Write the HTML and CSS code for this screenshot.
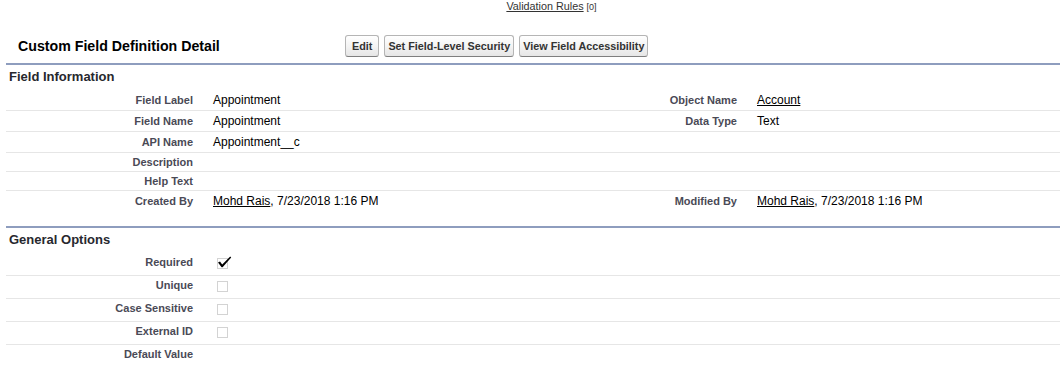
FILE: index.html
```html
<!doctype html>
<html>
  <head>
    <meta charset="utf-8">
    <title>Custom Field Definition Detail</title>
    <link rel="stylesheet" href="styles.css">
  </head>

  <body>
    <div class="relatedLinks">
      <a href="#">Validation Rules</a> <span class="count">[0]</span>
    </div>

    <div class="page">
      <div class="blockHeader">
        <h2 class="mainTitle">Custom Field Definition Detail</h2>
        <div class="buttons">
          <button class="btn"> Edit </button>
          <button class="btn">Set Field-Level Security</button>
          <button class="btn">View Field Accessibility</button>
        </div>
      </div>

      <div class="section">
        <h3>Field Information</h3>
        <div class="detailList">
          <div class="row">
            <div class="labelCol">Field Label</div>
            <div class="dataCol">Appointment</div>
            <div class="labelCol">Object Name</div>
            <div class="dataCol"><a href="#">Account</a></div>
          </div>
          <div class="row">
            <div class="labelCol">Field Name</div>
            <div class="dataCol">Appointment</div>
            <div class="labelCol">Data Type</div>
            <div class="dataCol">Text</div>
          </div>
          <div class="row">
            <div class="labelCol">API Name</div>
            <div class="dataCol">Appointment__c</div>
            <div class="labelCol"></div>
            <div class="dataCol"></div>
          </div>
          <div class="row">
            <div class="labelCol">Description</div>
            <div class="dataCol"></div>
            <div class="labelCol"></div>
            <div class="dataCol"></div>
          </div>
          <div class="row">
            <div class="labelCol">Help Text</div>
            <div class="dataCol"></div>
            <div class="labelCol"></div>
            <div class="dataCol"></div>
          </div>
          <div class="row last">
            <div class="labelCol">Created By</div>
            <div class="dataCol"><a href="#">Mohd Rais</a>, 7/23/2018 1:16 PM</div>
            <div class="labelCol">Modified By</div>
            <div class="dataCol"><a href="#">Mohd Rais</a>, 7/23/2018 1:16 PM</div>
          </div>
        </div>
      </div>

      <div class="section options">
        <h3>General Options</h3>
        <div class="detailList">
          <div class="row">
            <div class="labelCol">Required</div>
            <div class="dataCol">
              <svg class="checkImg" width="21" height="17" viewBox="0 0 21 17">
                <rect x="4.5" y="2.5" width="10" height="10" fill="none" stroke="#a6a6a6" stroke-dasharray="1 1"/>
                <path d="M5 6.6 L7 5.6 L9.2 8.4 L17.2 0.4 L18.2 1.4 L9.6 11.2 L8.6 11.2 Z" fill="#000"/>
              </svg>
            </div>
          </div>
          <div class="row">
            <div class="labelCol">Unique</div>
            <div class="dataCol">
              <svg class="checkImg" width="21" height="17" viewBox="0 0 21 17">
                <rect x="4.5" y="2.5" width="10" height="10" fill="none" stroke="#a6a6a6" stroke-dasharray="1 1"/>
              </svg>
            </div>
          </div>
          <div class="row">
            <div class="labelCol">Case Sensitive</div>
            <div class="dataCol">
              <svg class="checkImg" width="21" height="17" viewBox="0 0 21 17">
                <rect x="4.5" y="2.5" width="10" height="10" fill="none" stroke="#a6a6a6" stroke-dasharray="1 1"/>
              </svg>
            </div>
          </div>
          <div class="row">
            <div class="labelCol">External ID</div>
            <div class="dataCol">
              <svg class="checkImg" width="21" height="17" viewBox="0 0 21 17">
                <rect x="4.5" y="2.5" width="10" height="10" fill="none" stroke="#a6a6a6" stroke-dasharray="1 1"/>
              </svg>
            </div>
          </div>
          <div class="row last">
            <div class="labelCol">Default Value</div>
            <div class="dataCol"></div>
          </div>
        </div>
      </div>
    </div>
  </body>
</html>
```

FILE: styles.css
```css
body {
  margin:0;
  font-family:"Liberation Sans", Arial, sans-serif;
  font-size:12px;
  color:#000;
  background-color:#fff;
}

a {
  color:#000;
  text-decoration:underline;
}

.relatedLinks {
  padding-left:43px;
  text-align:center;
  font-size:10.8px;
  line-height:12px;
  color:#333;
}

.relatedLinks a {
  color:#333;
}

.relatedLinks .count {
  font-size:9px;
}

.page {
  padding-left:6px;
}

.blockHeader {
  display:flex;
  align-items:center;
  padding-top:22px;
  padding-bottom:6px;
}

.mainTitle {
  box-sizing:border-box;
  width:339px;
  margin:0;
  padding-left:12px;
  font-size:14.2px;
  font-weight:bold;
  line-height:18px;
  color:#000;
}

.buttons {
  display:flex;
  gap:5px;
}

.btn {
  margin:0;
  padding:4px 3px;
  font-family:"Liberation Sans", Arial, sans-serif;
  font-size:10.8px;
  font-weight:bold;
  line-height:12px;
  white-space:pre;
  color:#333;
  border:1px solid #b5b5b5;
  border-bottom-color:#7f7f7f;
  border-radius:3px;
  background:linear-gradient(#ffffff, #f4f4f4 50%, #e6e6e6);
}

.section {
  border-top:2px solid #8e9dbe;
  margin-bottom:15px;
}

.section h3 {
  margin:0;
  padding:5px 3px 6px;
  font-size:13px;
  font-weight:bold;
  line-height:14px;
  color:#27282e;
}

.row {
  display:grid;
  grid-template-columns:197px 344px 200px 1fr;
  align-items:center;
  border-bottom:1px solid #e6e6e6;
}

.row.last {
  border-bottom:none;
}

.labelCol {
  padding:3px 10px 2px 2px;
  text-align:right;
  font-size:11px;
  font-weight:bold;
  line-height:13px;
  color:#4a4a56;
}

.dataCol {
  padding:3px 10px 2px 10px;
  line-height:15px;
}

.options .row {
  align-items:start;
}

.checkImg {
  display:block;
}
```
